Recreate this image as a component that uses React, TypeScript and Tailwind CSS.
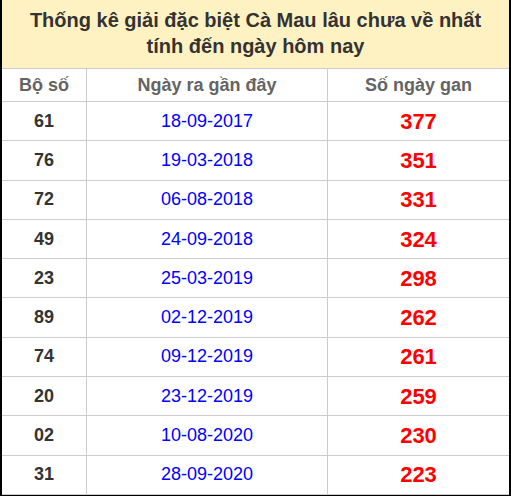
const rows: [string, string, string][] = [
  ["61", "18-09-2017", "377"],
  ["76", "19-03-2018", "351"],
  ["72", "06-08-2018", "331"],
  ["49", "24-09-2018", "324"],
  ["23", "25-03-2019", "298"],
  ["89", "02-12-2019", "262"],
  ["74", "09-12-2019", "261"],
  ["20", "23-12-2019", "259"],
  ["02", "10-08-2020", "230"],
  ["31", "28-09-2020", "223"],
];

export default function App() {
  return (
    <div
      className="w-[511px] h-[496px] bg-white border-l-2 border-r-2 border-b border-black flex flex-col"
      style={{ fontFamily: '"Liberation Sans", Arial, sans-serif' }}
    >
      <div className="h-[69px] shrink-0 bg-[#fff2c2] border-b border-[#cccccc] flex flex-col items-center justify-center text-[20px] font-bold text-[#333333] leading-[26px] pb-[2px]">
        <div>Thống kê giải đặc biệt Cà Mau lâu chưa về nhất</div>
        <div>tính đến ngày hôm nay</div>
      </div>
      <div className="h-[33px] shrink-0 flex border-b border-[#cccccc] text-[18px] font-bold text-[#646464]">
        <div className="w-[85px] border-r border-[#cccccc] flex items-center justify-center">Bộ số</div>
        <div className="w-[241px] border-r border-[#cccccc] flex items-center justify-center">Ngày ra gần đây</div>
        <div className="flex-1 flex items-center justify-center">Số ngày gan</div>
      </div>
      <div className="flex-1 flex flex-col">
        {rows.map(([a, b, c]) => (
          <div key={a} className="flex-1 flex border-b border-[#cccccc]">
            <div className="w-[85px] border-r border-[#cccccc] flex items-center justify-center text-[18px] font-bold text-[#333333]">
              {a}
            </div>
            <div className="w-[241px] border-r border-[#cccccc] flex items-center justify-center text-[18px] text-[#0000ff]">
              {b}
            </div>
            <div className="flex-1 flex items-center justify-center text-[22px] font-bold text-[#ff0000]">
              {c}
            </div>
          </div>
        ))}
      </div>
    </div>
  );
}
